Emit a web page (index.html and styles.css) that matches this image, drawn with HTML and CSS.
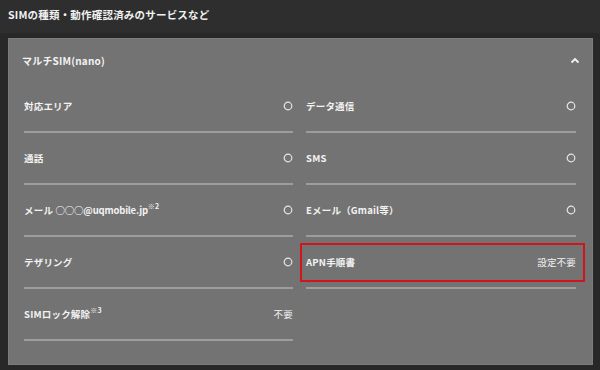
FILE: index.html
```html
<!DOCTYPE html>
<html lang="ja">
<head>
<meta charset="utf-8">
<link rel="stylesheet" href="styles.css">
</head>
<body>
<div class="title">SIMの種類・動作確認済みのサービスなど</div>
<div class="wrap">
  <div class="panel">
    <div class="panel-head">
      <span>マルチSIM(nano)</span>
      <svg class="chev" width="10" height="7" viewBox="0 0 10 7"><path d="M1.5 5.5 L5 2 L8.5 5.5" fill="none" stroke="#f2f2f2" stroke-width="1.8"/></svg>
    </div>
    <div class="grid">
      <div class="col">
        <div class="row"><span>対応エリア</span><svg class="ok" width="10" height="10" viewBox="0 0 10 10"><circle cx="5" cy="5" r="3.8" fill="none" stroke="#e6e6e6" stroke-width="1.2"/></svg></div>
        <div class="row"><span>通話</span><svg class="ok" width="10" height="10" viewBox="0 0 10 10"><circle cx="5" cy="5" r="3.8" fill="none" stroke="#e6e6e6" stroke-width="1.2"/></svg></div>
        <div class="row"><span>メール <span class="mail">○○○@uqmobile.jp</span><sup>※2</sup></span><svg class="ok" width="10" height="10" viewBox="0 0 10 10"><circle cx="5" cy="5" r="3.8" fill="none" stroke="#e6e6e6" stroke-width="1.2"/></svg></div>
        <div class="row"><span>テザリング</span><svg class="ok" width="10" height="10" viewBox="0 0 10 10"><circle cx="5" cy="5" r="3.8" fill="none" stroke="#e6e6e6" stroke-width="1.2"/></svg></div>
        <div class="row"><span>SIMロック解除<sup>※3</sup></span><span class="val">不要</span></div>
      </div>
      <div class="col">
        <div class="row"><span>データ通信</span><svg class="ok" width="10" height="10" viewBox="0 0 10 10"><circle cx="5" cy="5" r="3.8" fill="none" stroke="#e6e6e6" stroke-width="1.2"/></svg></div>
        <div class="row"><span>SMS</span><svg class="ok" width="10" height="10" viewBox="0 0 10 10"><circle cx="5" cy="5" r="3.8" fill="none" stroke="#e6e6e6" stroke-width="1.2"/></svg></div>
        <div class="row"><span>Eメール（Gmail等）</span><svg class="ok" width="10" height="10" viewBox="0 0 10 10"><circle cx="5" cy="5" r="3.8" fill="none" stroke="#e6e6e6" stroke-width="1.2"/></svg></div>
        <div class="row marked"><span>APN手順書</span><span class="val">設定不要</span><div class="highlight"></div></div>
      </div>
    </div>
  </div>
</div>
</body>
</html>
```
FILE: styles.css
```css
* { box-sizing: border-box; }
html, body { margin: 0; padding: 0; }
body {
  width: 600px;
  height: 370px;
  background: #2e2e2e;
  font-family: "Noto Sans CJK JP", "Noto Sans", sans-serif;
  font-weight: 700;
  color: #f2f2f2;
  overflow: hidden;
}
.title {
  height: 33px;
  padding: 0 8px 5px;
  display: flex;
  align-items: center;
  font-size: 10.5px;
  letter-spacing: 0.2px;
}
.wrap {
  background: #282828;
  padding: 5px 7px 5px 8px;
}
.panel {
  height: 327px;
  background: #737373;
  border: 1px solid #7d7d7d;
  padding: 0 16px 0 15px;
}
.panel-head {
  height: 42px;
  display: flex;
  align-items: center;
  justify-content: space-between;
  font-size: 10px;
  letter-spacing: 0.2px;
  margin-left: -2px;
}
.chev { margin-right: -4px; }
.grid {
  display: grid;
  grid-template-columns: 269px 270px;
  column-gap: 13px;
}
.row {
  position: relative;
  height: 52px;
  border-bottom: 2px solid #9d9d9d;
  display: flex;
  align-items: center;
  justify-content: space-between;
  font-size: 9.5px;
  letter-spacing: 0.2px;
}
.mail { letter-spacing: -0.2px; }
.row sup {
  font-size: 7px;
  vertical-align: 5px;
  line-height: 0;
}
.ok { margin-right: 0; }
.val { font-weight: 400; font-size: 9.5px; }
.highlight {
  position: absolute;
  top: 6px;
  left: -6px;
  right: -9px;
  bottom: 5px;
  border: 2px solid #d4141c;
}
```
